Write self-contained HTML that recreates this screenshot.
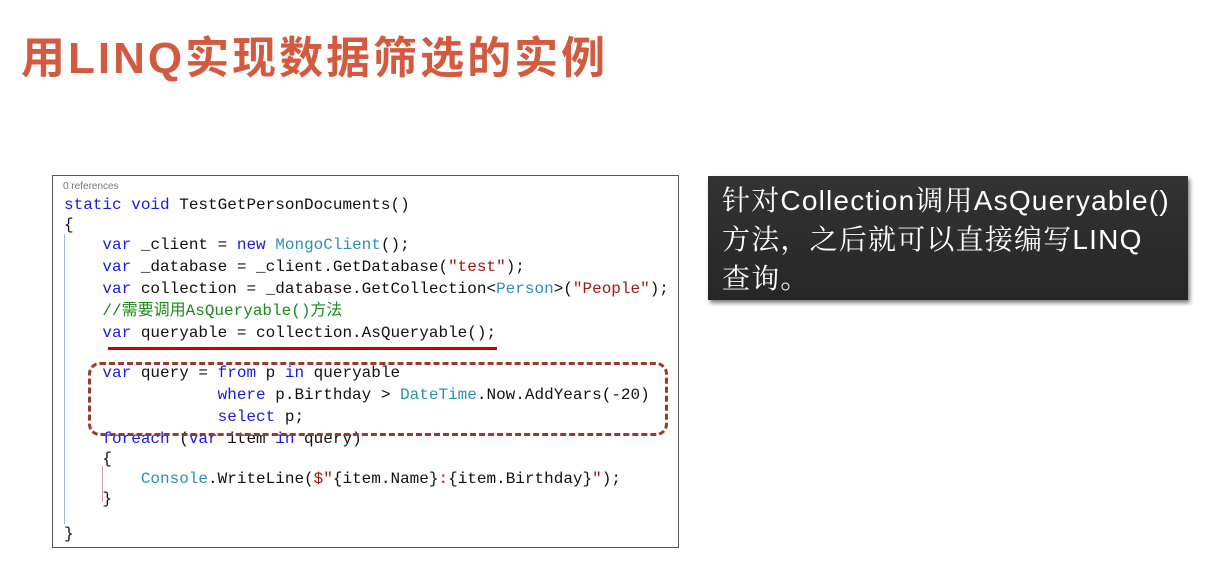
<!DOCTYPE html>
<html><head><meta charset="utf-8"><style>
body{margin:0;width:1224px;height:578px;background:#fff;position:relative;overflow:hidden;font-family:"Liberation Sans","Noto Sans CJK SC",sans-serif}
.title{position:absolute;left:21px;top:29px;font-size:44px;letter-spacing:3px;font-weight:bold;color:#d35a3e;line-height:60px;white-space:nowrap;font-family:"Liberation Sans","Noto Sans CJK SC",sans-serif}
.code{position:absolute;left:52px;top:175px;width:627px;height:373px;border:1px solid #555;background:#fff;box-sizing:border-box}
.l{position:absolute;font-family:"Liberation Mono","Noto Sans CJK SC",monospace;font-size:16px;line-height:20px;white-space:pre;color:#111}
.k{color:#1a1ae0}.t{color:#2b91af}.s{color:#a31515}.c{color:#1a8a1a}
.refs{position:absolute;left:10px;top:5px;font-size:10px;color:#777}
.box{position:absolute;left:708px;top:176px;width:480px;height:124px;background:linear-gradient(#333,#262626);box-shadow:2px 3px 4px rgba(0,0,0,.5);color:#fff;font-size:28px;letter-spacing:1.2px;line-height:39px;padding:5px 0 0 14px;box-sizing:border-box;white-space:nowrap;font-family:"Liberation Sans","Noto Serif CJK SC",serif}
</style></head><body>
<div class="title">用LINQ实现数据筛选的实例</div>
<div class="code">
<div class="refs">0 references</div>
<div style="position:absolute;left:11px;top:58px;width:1px;height:290px;background:#9fb8e0"></div>
<div style="position:absolute;left:49px;top:290px;width:1px;height:36px;background:#d8a0a0"></div>
<div class="l" style="left:11px;top:19px"><span class="k">static void</span> TestGetPersonDocuments()</div>
<div class="l" style="left:11px;top:39px">{</div>
<div class="l" style="left:11px;top:59px">    <span class="k">var</span> _client = <span class="k">new</span> <span class="t">MongoClient</span>();</div>
<div class="l" style="left:11px;top:81px">    <span class="k">var</span> _database = _client.GetDatabase(<span class="s">"test"</span>);</div>
<div class="l" style="left:11px;top:103px">    <span class="k">var</span> collection = _database.GetCollection&lt;<span class="t">Person</span>&gt;(<span class="s">"People"</span>);</div>
<div class="l c" style="left:11px;top:125px">    //需要调用AsQueryable()方法</div>
<div class="l" style="left:11px;top:147px">    <span class="k">var</span> queryable = collection.AsQueryable();</div>
<div style="position:absolute;left:55px;top:171px;width:389px;height:3px;background:#c00"></div>
<div class="l" style="left:11px;top:187px">    <span class="k">var</span> query = <span class="k">from</span> p <span class="k">in</span> queryable</div>
<div class="l" style="left:11px;top:209px">                <span class="k">where</span> p.Birthday &gt; <span class="t">DateTime</span>.Now.AddYears(-20)</div>
<div class="l" style="left:11px;top:231px">                <span class="k">select</span> p;</div>
<div class="l" style="left:11px;top:253px">    <span class="k">foreach</span> (<span class="k">var</span> item <span class="k">in</span> query)</div>
<div class="l" style="left:11px;top:273px">    {</div>
<div class="l" style="left:11px;top:293px">        <span class="t">Console</span>.WriteLine(<span class="s">$"</span>{item.Name}<span class="s">:</span>{item.Birthday}<span class="s">"</span>);</div>
<div class="l" style="left:11px;top:313px">    }</div>
<div class="l" style="left:11px;top:348px">}</div>
<div style="position:absolute;left:35px;top:186px;width:574px;height:68px;border:3px dashed #9a3a2a;border-radius:12px"></div>
</div>
<div class="box">针对Collection调用AsQueryable()<br>方法，之后就可以直接编写LINQ<br>查询。</div>
</body></html>
